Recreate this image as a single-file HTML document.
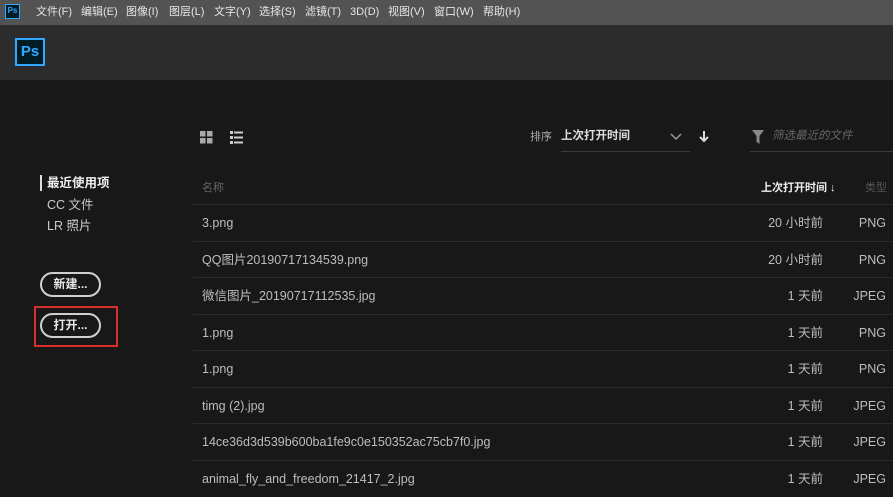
<!DOCTYPE html>
<html><head><meta charset="utf-8"><style>
*{margin:0;padding:0;box-sizing:border-box}
body{width:893px;height:492px;overflow:hidden;background:#181818;font-family:"Liberation Sans","Noto Sans CJK SC",sans-serif;color:#c8c8c8;position:relative}
.menu{position:absolute;left:0;top:0;width:893px;height:25px;background:#535353;font-size:11px;color:#e6e6e6}
.menu span{position:absolute;top:0;line-height:24px;height:24px}
.hdr{position:absolute;left:0;top:25px;width:893px;height:55px;background:#2c2c2c}
.ps{position:absolute;border:2px solid #31a8ff;background:#001d26;color:#31a8ff;font-weight:bold;text-align:center}
.abs{position:absolute;line-height:16px}
.row{position:absolute;left:193px;width:700px;height:37px;border-top:1px solid #2a2a2a;font-size:12.5px;color:#bdbdbd}
.row span{position:absolute;top:0;line-height:36px;height:36px;white-space:nowrap}
.row .n{left:9px}
.row .t{right:70px}
.row .k{right:7px}
.btn{position:absolute;left:40px;width:61px;height:25px;border:2px solid #d0d0d0;border-radius:13px;font-size:12px;font-weight:bold;color:#e8e8e8;text-align:center;line-height:21px}
</style></head><body>
<div class="menu">
<div class="ps" style="left:5px;top:4px;width:15px;height:15px;font-size:8px;line-height:11px;border-width:1px">Ps</div>
<span style="left:36px">文件(F)</span><span style="left:81px">编辑(E)</span><span style="left:126px">图像(I)</span><span style="left:169px">图层(L)</span><span style="left:214px">文字(Y)</span><span style="left:259px">选择(S)</span><span style="left:305px">滤镜(T)</span><span style="left:350px">3D(D)</span><span style="left:388px">视图(V)</span><span style="left:434px">窗口(W)</span><span style="left:483px">帮助(H)</span>
</div>
<div class="hdr"><div class="ps" style="left:15px;top:13px;width:30px;height:28px;font-size:15px;line-height:24px">Ps</div></div>
<svg class="abs" style="left:200px;top:131px" width="13" height="13"><rect x="0" y="0" width="5.5" height="5.5" fill="#aaa"/><rect x="7" y="0" width="5.5" height="5.5" fill="#aaa"/><rect x="0" y="7" width="5.5" height="5.5" fill="#aaa"/><rect x="7" y="7" width="5.5" height="5.5" fill="#aaa"/></svg>
<svg class="abs" style="left:230px;top:131px" width="13" height="13" fill="#ccc"><rect x="0" y="0" width="3" height="3"/><rect x="4" y="0.5" width="9" height="2"/><rect x="0" y="5" width="3" height="3"/><rect x="4" y="5.5" width="9" height="2"/><rect x="0" y="10" width="3" height="3"/><rect x="4" y="10.5" width="9" height="2"/></svg>
<div class="abs" style="left:530px;top:129px;font-size:11px;color:#aaa">排序</div>
<div class="abs" style="left:561px;top:128px;font-size:11.5px;color:#ddd;font-weight:bold">上次打开时间</div>
<div class="abs" style="left:561px;top:151px;width:129px;height:1px;background:#3a3a3a"></div>
<svg class="abs" style="left:670px;top:133px" width="12" height="8"><path d="M1 1l5 5 5-5" stroke="#999" fill="none" stroke-width="1.5"/></svg>
<svg class="abs" style="left:698px;top:130px" width="12" height="13"><path d="M6 1v10M2 7l4 4 4-4" stroke="#ddd" fill="none" stroke-width="2"/></svg>
<svg class="abs" style="left:752px;top:130px" width="12" height="14"><path d="M0 0h12L7.5 6v8L4.5 12V6z" fill="#888"/></svg>
<div class="abs" style="left:772px;top:128px;font-size:11.5px;color:#666;font-style:italic">筛选最近的文件</div>
<div class="abs" style="left:750px;top:151px;width:143px;height:1px;background:#3a3a3a"></div>
<div class="abs" style="left:40px;top:175px;width:2px;height:16px;background:#ddd"></div>
<div class="abs" style="left:47px;top:175px;font-size:12.5px;font-weight:bold;color:#f0f0f0">最近使用项</div>
<div class="abs" style="left:47px;top:197px;font-size:12.5px;color:#ccc">CC 文件</div>
<div class="abs" style="left:47px;top:218px;font-size:12.5px;color:#ccc">LR 照片</div>
<div class="btn" style="top:272px">新建...</div>
<div class="btn" style="top:313px">打开...</div>
<div class="abs" style="left:34px;top:306px;width:84px;height:41px;border:2px solid #d9302c"></div>
<div class="abs" style="left:202px;top:180px;font-size:11px;color:#666">名称</div>
<div class="abs" style="left:761px;top:180px;font-size:11px;color:#eee;font-weight:bold">上次打开时间 ↓</div>
<div class="abs" style="left:865px;top:180px;font-size:11px;color:#555">类型</div>
<div class="row" style="top:204px"><span class="n">3.png</span><span class="t">20 小时前</span><span class="k">PNG</span></div>
<div class="row" style="top:241px"><span class="n">QQ图片20190717134539.png</span><span class="t">20 小时前</span><span class="k">PNG</span></div>
<div class="row" style="top:277px"><span class="n">微信图片_20190717112535.jpg</span><span class="t">1 天前</span><span class="k">JPEG</span></div>
<div class="row" style="top:314px"><span class="n">1.png</span><span class="t">1 天前</span><span class="k">PNG</span></div>
<div class="row" style="top:350px"><span class="n">1.png</span><span class="t">1 天前</span><span class="k">PNG</span></div>
<div class="row" style="top:387px"><span class="n">timg (2).jpg</span><span class="t">1 天前</span><span class="k">JPEG</span></div>
<div class="row" style="top:423px"><span class="n">14ce36d3d539b600ba1fe9c0e150352ac75cb7f0.jpg</span><span class="t">1 天前</span><span class="k">JPEG</span></div>
<div class="row" style="top:460px"><span class="n">animal_fly_and_freedom_21417_2.jpg</span><span class="t">1 天前</span><span class="k">JPEG</span></div>
</body></html>
